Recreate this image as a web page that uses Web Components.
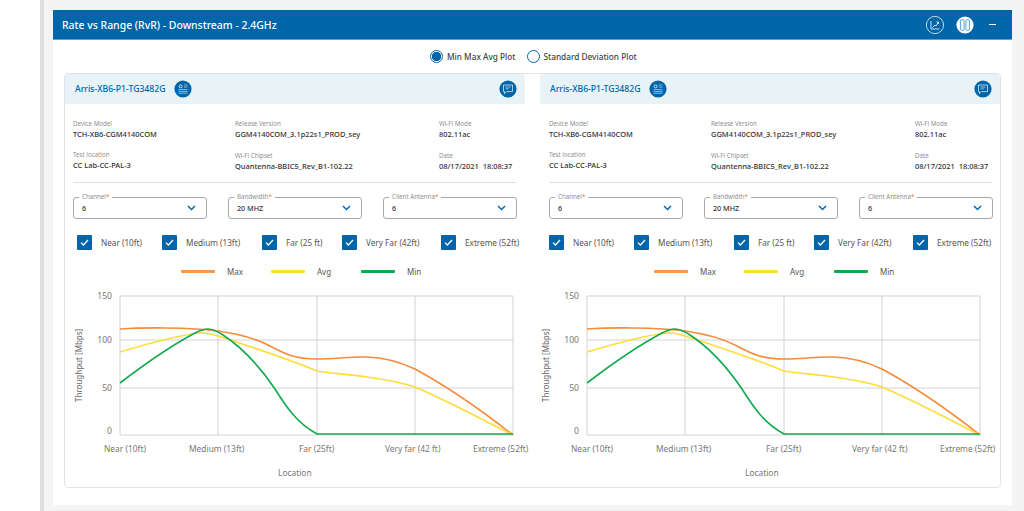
<!doctype html>
<html>
<head>
<meta charset="utf-8">
<title>Rate vs Range</title>
<style>
html,body{margin:0;height:511px;overflow:hidden;background:#f4f4f4;font-family:"Noto Sans","Liberation Sans",sans-serif}
body{display:flex}
</style>
</head>
<body>
<side-rail></side-rail>
<rvr-panel heading="Rate vs Range (RvR) - Downstream - 2.4GHz">
  <rvr-device inset="8" checks="12" shift="0" legend="116"></rvr-device>
  <rvr-device inset="9" checks="9" shift="-8" legend="114"></rvr-device>
</rvr-panel>

<script>
const ICONS = {
  trend:`<path d="M-4 -4V4H4.5M-2.5 2.5L0 0L1 1L3.5 -3M1.5 -3H3.5V-1" fill="none" stroke="currentColor" stroke-width=".9"/>`,
  columns:`<rect x="-4.5" y="-5.5" width="3.6" height="11" rx="1.8" fill="none" stroke="currentColor" stroke-width="1.1"/><rect x=".9" y="-5.5" width="3.6" height="11" rx="1.8" fill="none" stroke="currentColor" stroke-width="1.1"/>`,
  details:`<circle cx="-2.4" cy="-2.6" r="1.5" fill="none" stroke="currentColor" stroke-width=".8"/><path d="M1 -4H4.5M1 -2H4.5M-4.5 .6H4.5M-4.5 2.4H4.5M-4.5 4.2H4.5" stroke="currentColor" stroke-width=".7" fill="none" opacity=".8"/>`,
  comment:`<path d="M-4.5 -4H4.5V2.6H-1.5L-3.5 4.6V2.6H-4.5Z" fill="none" stroke="currentColor" stroke-width=".8" opacity=".85"/><path d="M-2.5 -2H2.5M-2.5 -.2H.8" stroke="currentColor" stroke-width=".7" fill="none" opacity=".85"/>`
}

class iconbtn extends HTMLElement{
  connectedCallback(){
    const kind = this.getAttribute("kind")
    this.attachShadow({mode:"open"}).innerHTML = `
    <style>
      :host{display:inline-flex;width:18px;height:18px;color:var(--fg,#fff)}
      svg{display:block}
    </style>
    <svg width="18" height="18" viewBox="-9 -9 18 18">
      <circle r="8.6" fill="var(--bg,#0065a9)" stroke="var(--ring,none)" stroke-width=".9"/>
      ${ICONS[kind]}
    </svg>`
  }
}
customElements.define("icon-btn",iconbtn)

class siderail extends HTMLElement{
  connectedCallback(){
    this.attachShadow({mode:"open"}).innerHTML = `
    <style>
      :host{display:block;flex:none;width:40px;height:511px;margin-right:9px;
        background:radial-gradient(#f6f6f6 .6px,#fff .7px) 0 0/4px 4px;
        border-right:4px solid #dedede}
    </style>`
  }
}
customElements.define("side-rail",siderail)

class rvrpanel extends HTMLElement{
  connectedCallback(){
    this.attachShadow({mode:"open"}).innerHTML = `
    <style>
      :host{display:block;width:959px;height:495px;margin-top:10px;background:#fff;font-family:"Noto Sans","Liberation Sans",sans-serif}
      header{height:29px;background:#0065a9;color:#fff;display:flex;align-items:center;padding-left:9px;
        border-bottom:1px solid #5aa2d3}
      h1{flex:1;margin:0;font-size:10.45px;font-weight:500}
      .tools{display:flex;align-items:center}
      .tools icon-btn+icon-btn{margin-left:12px}
      .white{--bg:#fff;--fg:#6aa9d6}
      .line{--bg:transparent;--ring:#cfe3f1;--fg:#e3eff7}
      .min{width:7px;height:1.5px;background:#fff;margin:0 16px 0 15px}
      .modes{height:33px;display:flex;align-items:center;padding-left:377px;font-size:8.25px;font-weight:500;color:#444}
      .radio{width:13px;height:13px;border-radius:50%;border:1.2px solid #0065a9;box-sizing:border-box;margin-right:4px;flex:none}
      .radio.on{background:radial-gradient(circle,#0065a9 4.4px,#fff 4.9px)}
      .modes span+.radio{margin-left:11px}
      .card{margin-left:11px;width:937px;height:415px;box-sizing:border-box;border:1px solid #dfe3e6;border-radius:4px;
        display:grid;grid-template-columns:460px 460px;column-gap:15px;align-items:start}
    </style>
    <header>
      <h1>${this.getAttribute("heading")}</h1>
      <div class="tools">
        <icon-btn class="line" kind="trend"></icon-btn>
        <icon-btn class="white" kind="columns"></icon-btn>
        <div class="min"></div>
      </div>
    </header>
    <div class="modes">
      <div class="radio on"></div><span>Min Max Avg Plot</span>
      <div class="radio"></div><span>Standard Deviation Plot</span>
    </div>
    <div class="card"><slot></slot></div>`
  }
}
customElements.define("rvr-panel",rvrpanel)

class rvrselect extends HTMLElement{
  connectedCallback(){
    this.attachShadow({mode:"open"}).innerHTML = `
    <style>
      :host{display:flex;align-items:center;position:relative;width:134px;height:22px;box-sizing:border-box;
        border:1px solid #a9a9a9;border-radius:3px;padding:0 10px 0 8px;font-size:7.2px;font-weight:500;color:#333}
      label{position:absolute;left:5px;top:-5px;background:#fff;padding:0 3px;font-size:6.2px;line-height:8px;font-weight:400;color:#8f8f8f}
      b{color:#ef7d2d;font-weight:400}
      span{flex:1}
      svg{display:block}
    </style>
    <label>${this.getAttribute("label")}<b>*</b></label>
    <span>${this.getAttribute("value")}</span>
    <svg width="9" height="6" viewBox="0 0 9 6"><path d="M1 1L4.5 4.6L8 1" fill="none" stroke="#0065a9" stroke-width="1.4"/></svg>`
  }
}
customElements.define("rvr-select",rvrselect)

class rvrcheck extends HTMLElement{
  connectedCallback(){
    this.attachShadow({mode:"open"}).innerHTML = `
    <style>
      :host{display:flex;align-items:center;font-size:8.2px;color:#555;white-space:nowrap}
      svg{display:block;margin-right:9px;flex:none}
    </style>
    <svg width="15" height="15" viewBox="0 0 15 15"><rect width="15" height="15" rx="1" fill="#0065a9"/><path d="M4 7.6L6.4 10L11 5" fill="none" stroke="#fff" stroke-width="1.3"/></svg>
    <span><slot></slot></span>`
  }
}
customElements.define("rvr-check",rvrcheck)

const MAX_LINE = "M55 329C75 327.5 125 327 153 331C175 334 190 338 205 346C220 354 230 359 252 359C270 359 285 356.5 302 357C320 357.5 335 362 350 369C385 388 420 413 448 435"
const AVG_LINE = "M55 352C85 343 115 335 135 333C142 332.5 147 334 153 336C190 348 225 360 252 371C268 373.5 285 374.5 302 377C320 379.5 335 382 350 387C385 402 420 421 448 435"
const MIN_LINE = "M55 383C85 360 115 341 130 333C136 330 140 329 143 329C148 329 152 331 158 335C178 348 195 367 210 389C222 408 232 423 252 434L448 434"

class rvrchart extends HTMLElement{
  connectedCallback(){
    const xs = [55,153,252,350,448], ys = [296,340,388,435]
    const grid = xs.map(x=>`<line x1="${x}" x2="${x}" y1="296" y2="435"/>`).join("")+
      ys.map(y=>`<line x1="55" x2="448" y1="${y}" y2="${y}"/>`).join("")
    this.attachShadow({mode:"open"}).innerHTML = `
    <style>
      :host{display:block;width:470px;height:210px;margin-left:var(--shift,0px);font-family:"Noto Sans","Liberation Sans",sans-serif}
      svg{display:block;overflow:visible}
      .g line{stroke:#d2d2d2;stroke-width:1}
      text{font-size:8.4px;fill:#777}
      .y{font-size:8.6px;text-anchor:end}
      path{fill:none;stroke-width:1.6}
    </style>
    <svg width="470" height="210" viewBox="0 286 470 210">
      <g class="g">${grid}</g>
      <text class="y" x="47" y="299">150</text>
      <text class="y" x="47" y="343">100</text>
      <text class="y" x="47" y="391">50</text>
      <text class="y" x="47" y="434">0</text>
      <text transform="translate(17 402) rotate(-90)" style="font-size:8px;fill:#666">Throughput [Mbps]</text>
      <text x="39" y="452">Near (10ft)</text>
      <text x="124" y="452">Medium (13ft)</text>
      <text x="234" y="452">Far (25ft)</text>
      <text x="320" y="452">Very far (42 ft)</text>
      <text x="408" y="452">Extreme (52ft)</text>
      <text x="213" y="476">Location</text>
      <path d="${MAX_LINE}" stroke="#f68b3c"/>
      <path d="${AVG_LINE}" stroke="#ffdc3a"/>
      <path d="${MIN_LINE}" stroke="#12a94f"/>
    </svg>`
  }
}
customElements.define("rvr-chart",rvrchart)

class rvrdevice extends HTMLElement{
  connectedCallback(){
    const inset = Number(this.getAttribute("inset"))
    this.attachShadow({mode:"open"}).innerHTML = `
    <style>
      :host{display:block;font-family:"Noto Sans","Liberation Sans",sans-serif;--shift:${this.getAttribute("shift")}px}
      .top{height:30px;background:#e8f3f8;display:flex;align-items:center;padding:0 8px 0 10px;box-sizing:border-box;border-radius:3px 3px 0 0}
      .name{font-size:8.65px;font-weight:500;color:#0065a9;margin-right:9px}
      .sp{flex:1}
      .info{display:flex;padding:16px 0 0 ${inset}px;height:62px}
      .col{display:flex;flex-direction:column}
      .c1{width:162px;gap:12px}
      .c2{width:204px;gap:13px}
      .c3{gap:13px}
      .f{display:flex;flex-direction:column;gap:2px}
      small{font-size:6.2px;line-height:8px;color:#8f8f8f}
      strong{font-size:7.45px;line-height:9px;font-weight:500;color:#333;white-space:pre}
      hr{border:0;border-top:1px solid #dfdfdf;margin:0 9px 0 ${inset}px;width:443px}
      .sel{display:flex;gap:21px;padding:14px 0 0 ${inset}px}
      .checks{display:grid;grid-template-columns:85px 100px 80px 99px auto;padding:16px 0 0 ${this.getAttribute("checks")}px}
      .legend{display:flex;align-items:center;height:14px;margin:14px 0 8px ${this.getAttribute("legend")}px;font-size:8px;color:#555}
      .legend i{display:block;width:34px;height:3px;border-radius:1px;margin-right:12px}
      .legend span{width:44px}
    </style>
    <div class="top">
      <span class="name">Arris-XB6-P1-TG3482G</span>
      <icon-btn kind="details"></icon-btn>
      <span class="sp"></span>
      <icon-btn kind="comment"></icon-btn>
    </div>
    <div class="info">
      <div class="col c1">
        <div class="f"><small>Device Model</small><strong>TCH-XB6-CGM4140COM</strong></div>
        <div class="f"><small>Test location</small><strong>CC Lab-CC-PAL-3</strong></div>
      </div>
      <div class="col c2">
        <div class="f"><small>Release Version</small><strong>GGM4140COM_3.1p22s1_PROD_sey</strong></div>
        <div class="f"><small>Wi-Fi Chipset</small><strong>Quantenna-BBIC5_Rev_B1-102.22</strong></div>
      </div>
      <div class="col c3">
        <div class="f"><small>Wi-Fi Mode</small><strong>802.11ac</strong></div>
        <div class="f"><small>Date</small><strong>08/17/2021  18:08:37</strong></div>
      </div>
    </div>
    <hr>
    <div class="sel">
      <rvr-select label="Channel" value="6"></rvr-select>
      <rvr-select label="Bandwidth" value="20 MHZ"></rvr-select>
      <rvr-select label="Client Antenna" value="6"></rvr-select>
    </div>
    <div class="checks">
      <rvr-check>Near (10ft)</rvr-check>
      <rvr-check>Medium (13ft)</rvr-check>
      <rvr-check>Far (25 ft)</rvr-check>
      <rvr-check>Very Far (42ft)</rvr-check>
      <rvr-check>Extreme (52ft)</rvr-check>
    </div>
    <div class="legend">
      <i style="background:#f8984f"></i><span>Max</span>
      <i style="background:#ffdc3a"></i><span>Avg</span>
      <i style="background:#12a94f"></i><span>Min</span>
    </div>
    <rvr-chart></rvr-chart>`
  }
}
customElements.define("rvr-device",rvrdevice)
</script>
</body>
</html>
